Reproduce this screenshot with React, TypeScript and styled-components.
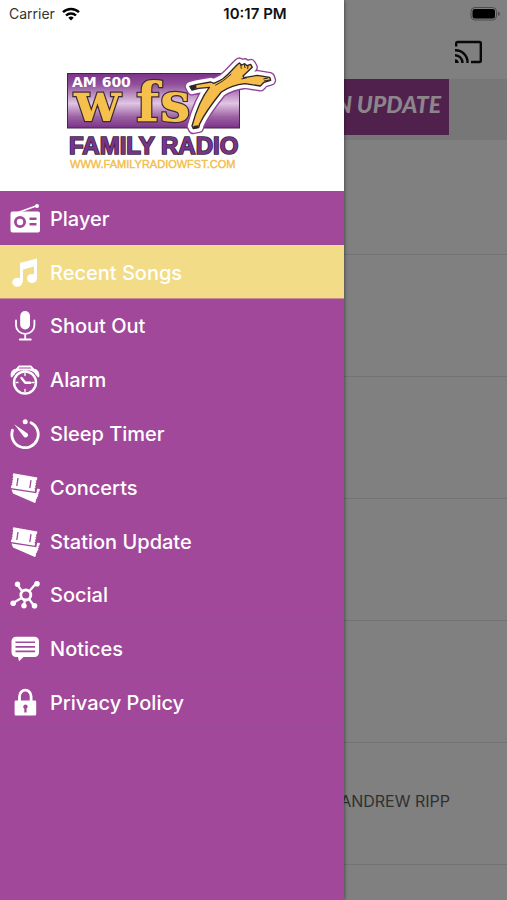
import React from 'react';
import styled, { createGlobalStyle } from 'styled-components';

const GlobalStyle = createGlobalStyle`
  * { box-sizing: border-box; }
  body {
    margin: 0;
    background: #808080;
    font-family: Inter, "Liberation Sans", sans-serif;
  }
`;

const Screen = styled.div`
  position: relative;
  min-height: 100vh;
  overflow: hidden;
  background: #808080;
`;

const StatusBar = styled.div`
  position: absolute;
  inset: 0 0 auto 0;
  z-index: 3;
  display: grid;
  grid-template-columns: 1fr auto 1fr;
  align-items: center;
  height: 27px;
  padding: 0 6px 0 9px;
  color: #111;
  font-size: 14px;
`;

const Carrier = styled.span`
  display: flex;
  align-items: center;
  gap: 7px;
  color: #333;
`;

const Clock = styled.time`
  font-size: 15px;
  font-weight: 600;
`;

const Battery = styled.svg`
  justify-self: end;
  width: 31px;
  height: 16px;
`;

const Toolbar = styled.header`
  display: flex;
  justify-content: flex-end;
  align-items: flex-end;
  height: 79px;
  padding: 0 24px 12px 0;
`;

const CastButton = styled.button`
  display: flex;
  padding: 0;
  border: 0;
  background: none;
  color: #080808;
`;

const BannerStrip = styled.div`
  display: flex;
  justify-content: center;
  height: 61px;
  padding: 0 58px 5px;
  background: #777;
`;

const Banner = styled.a`
  display: flex;
  flex: 1;
  align-items: center;
  justify-content: flex-end;
  padding: 0 8px 6px 0;
  overflow: hidden;
  background: #51214e;
  color: #8c868c;
  font: italic 900 23px Lato, sans-serif;
  text-decoration: none;
  white-space: nowrap;
`;

const Songs = styled.ul`
  margin: 0;
  padding: 0;
  list-style: none;
`;

const Song = styled.li<{ $first?: boolean }>`
  display: flex;
  align-items: center;
  justify-content: flex-end;
  height: ${(p) => (p.$first ? 115 : 122)}px;
  padding: 0 57px 6px;
  border-bottom: 1px solid #737373;
  color: #303030;
  font-size: 16px;

  &:last-child {
    height: 35px;
    border: 0;
  }
`;

const Drawer = styled.aside`
  position: absolute;
  inset: 0 auto 0 0;
  z-index: 2;
  width: 344px;
  max-width: 100%;
  background: #a1489b;
  box-shadow: 0 0 4px rgba(0, 0, 0, 0.6);
`;

const Brand = styled.div`
  height: 191px;
  padding: 50px 55px 0;
  background: #fff;
`;

const Menu = styled.nav`
  display: grid;
  grid-auto-rows: 1fr;
  height: 538px;
`;

const MenuLink = styled.a<{ $active?: boolean }>`
  display: flex;
  align-items: center;
  gap: 10px;
  padding: 3px 10px 0;
  border-bottom: 1px solid ${(p) => (p.$active ? '#c48d92' : '#9b4a98')};
  background: ${(p) => (p.$active ? '#f2dc87' : 'transparent')};
  color: #fff;
  font-size: 20px;
  font-weight: 500;
  text-decoration: none;
`;

const IconBox = styled.svg`
  flex: none;
  width: 30px;
  height: 30px;
  fill: currentColor;
`;

const line = { fill: 'none', stroke: 'currentColor', strokeLinecap: 'round', strokeLinejoin: 'round' } as const;

const RadioIcon = () => (
  <IconBox viewBox="0 0 30 30" aria-hidden="true">
    <path {...line} strokeWidth="1.6" d="M8 8.500 26 2" />
    <circle cx="27" cy="2" r="2" />
    <path fillRule="evenodd" d="M3 7.500h25a2 2 0 0 1 2 2v17a2 2 0 0 1-2 2H2.500a2 2 0 0 1-2-2v-17a2 2 0 0 1 2-2zM10 12a6 6 0 1 0 0 12 6 6 0 0 0 0-12zm0 2.800a3.200 3.200 0 1 1 0 6.400 3.200 3.200 0 0 1 0-6.400zM19.500 13.500v2.500h7v-2.500zm0 5.500v2.500h7V19z" />
  </IconBox>
);

const MusicIcon = () => (
  <IconBox viewBox="0 0 30 30" aria-hidden="true">
    <path d="M10 5 27 .5V21h-3V8.500L13 11.500V24h-3z" />
    <ellipse cx="7.300" cy="24.300" rx="5" ry="4.500" />
    <ellipse cx="22" cy="20.500" rx="5" ry="4.500" />
  </IconBox>
);

const MicIcon = () => (
  <IconBox viewBox="0 0 30 30" aria-hidden="true">
    <rect x="10.200" y="0" width="9.800" height="18.500" rx="4.900" />
    <path {...line} strokeWidth="1.800" d="M6 9.500v5a9.200 8.300 0 0 0 18.400 0v-5M15.200 23v5M9.800 28.500h11" />
  </IconBox>
);

const AlarmIcon = () => (
  <IconBox viewBox="0 0 30 30" aria-hidden="true">
    <circle {...line} cx="15" cy="17.500" r="11" strokeWidth="2.400" />
    <path {...line} strokeWidth="1.800" d="M6.500 4.500 9 1.500h12l2.500 3M3.500 9.500C4 7 5.500 5.500 8 4.500h14c2.500 1 4 2.500 4.500 5" />
    <path d="M1 12.500C-.5 7.500 2.500 3 8.500 3.500L10 5.500C6.500 6.500 4 9 2.500 12zM29 12.500C30.500 7.500 27.500 3 21.500 3.500L20 5.500c3.500 1 6 3.500 7.500 6.500z" />
    <path {...line} strokeWidth="2.400" d="m11.500 13 3.800 4.800h5" />
    <path {...line} strokeWidth="1.400" d="M15 8.500v2M15 24.500v2M6 17.500h2M22 17.500h2" />
  </IconBox>
);

const TimerIcon = () => (
  <IconBox viewBox="0 0 30 30" aria-hidden="true">
    <path {...line} strokeWidth="2.800" d="M21 3.700A13.200 13.200 0 1 1 2.500 11.300" />
    <circle cx="15.200" cy="2.800" r="2.500" />
    <path d="M4.200 5.200 17.600 14.500a2.500 2.500 0 0 1-3.500 3.500z" />
  </IconBox>
);

const TicketsIcon = () => (
  <IconBox viewBox="0 0 30 30" aria-hidden="true">
    <path d="M3.300.3 27.300 4.500 27 7l-1.200.7.700 1.500-1.100 1.100.8 1.500-1.200 1.100.6 1.500-1.100 1 .6 1.400-.4 2L.9 15l.3-2.200 1.200-1-.7-1.400L2.800 9.200 2 7.900l1.200-1.200-.8-1.300 1-1.300-.7-1.300z" />
    <path d="m1.500 16.600 24.800 3.700.9-4.600 2.700.4-.5 2.300-1.100.8.600 1.400-1.100 1.100.6 1.400-1.200 1-.3 1.500-1 1 .1 1.500-.9 2L3 20.500z" />
    <path d="m8 5-1.200 8M21 7.200l-1.200 8" fill="none" stroke="#a1489b" strokeWidth="1.300" />
  </IconBox>
);

const SocialIcon = () => (
  <IconBox viewBox="0 0 30 30" aria-hidden="true">
    <circle {...line} cx="15.800" cy="15" r="5" strokeWidth="2.800" />
    <path {...line} strokeWidth="2.200" d="M12 11 7.500 5M19.500 11l6-7M11.500 18 4 22.500M14.800 20.500 14 25M19 19l4.500 6" />
    <circle cx="7.500" cy="4.300" r="2.700" />
    <circle cx="27" cy="3.800" r="2.800" />
    <circle cx="3.200" cy="23.200" r="2.800" />
    <circle cx="14" cy="25.700" r="2.700" />
    <circle cx="24.500" cy="25.700" r="2.800" />
  </IconBox>
);

const NoticesIcon = () => (
  <IconBox viewBox="0 0 30 30" aria-hidden="true">
    <path fillRule="evenodd" d="M6 2.800h18.500A4.500 4.500 0 0 1 29 7.300v11.200a4.500 4.500 0 0 1-4.500 4.500H13.500L9 27.300l-1-4.300H6a4.500 4.500 0 0 1-4.500-4.500V7.300A4.500 4.500 0 0 1 6 2.800zM5.500 7.400v1.700h19.500V7.400zm0 4.600v1.700h19.500V12zm0 4.600v1.700h19.500v-1.700z" />
  </IconBox>
);

const LockIcon = () => (
  <IconBox viewBox="0 0 30 30" aria-hidden="true">
    <path {...line} strokeWidth="2.800" d="M9.500 13V8.500a5.800 6.300 0 0 1 11.600 0V13" />
    <path fillRule="evenodd" d="M5.800 12.500h19.200a1.200 1.200 0 0 1 1.200 1.200v12.600a1.200 1.200 0 0 1-1.200 1.200H5.800a1.200 1.200 0 0 1-1.200-1.200V13.700a1.200 1.200 0 0 1 1.200-1.200zm9.600 4a2.200 2.200 0 0 0-1.100 4.100v4h2.300v-4a2.200 2.200 0 0 0-1.200-4.100z" />
  </IconBox>
);

const crossPath =
  'M60 109 82 103 122 96 132 100 158 87 174 73 200 46 208 39 215 45 224 41 231 47 242 43 247 52 219 78 222 83 262 76 299 82 302 91 282 97 271 108 225 101C195 104 175 112 154 126 125 162 101 196 89 222L86 233 70 236 66 228C76 190 92 146 118 112L86 115 66 120z';

const Logo = () => (
  <svg width="230" height="130" viewBox="0 0 230 130" role="img" aria-label="WFST Family Radio">
    <defs>
      <linearGradient id="panel" x1="0" y1="0" x2="0" y2="1">
        <stop offset="0" stopColor="#7b3388" />
        <stop offset="0.2" stopColor="#91509b" />
        <stop offset="0.55" stopColor="#e0c5e2" />
        <stop offset="0.8" stopColor="#9b60a3" />
        <stop offset="1" stopColor="#7b3388" />
      </linearGradient>
    </defs>
    <rect x="12.500" y="23.500" width="172" height="54.500" fill="url(#panel)" stroke="#42264c" />
    <text x="17" y="37" fill="#fff" fontFamily="DejaVu Sans, sans-serif" fontWeight="700" fontSize="14">
      AM 600
    </text>
    <text x="19 81 105" y="71" fill="#f6c04d" stroke="#3c2a35" strokeWidth="2.400" paintOrder="stroke" fontFamily="DejaVu Serif, serif" fontWeight="700" fontSize="54">
      wfs
    </text>
    <g transform="translate(115 0) scale(.33333)" strokeLinejoin="round">
      <path d={crossPath} fill="#91439a" stroke="#91439a" strokeWidth="33" />
      <path d={crossPath} fill="#fff" stroke="#fff" strokeWidth="25" />
      <path d={crossPath} fill="#f6bd4a" stroke="#2d2527" strokeWidth="4" />
      <path d="M58 109 78 104 80 115 64 121zM70 228 86 226 83 234 70 236z" fill="#2d2527" />
      <path d="M212 44 214 56M223 43 225 54M234 47 233 57M294 84 280 87M300 90 282 93M184 72 160 92 136 106M231 83 214 87" fill="none" stroke="#2d2527" strokeWidth="3" />
    </g>
    <text x="14" y="104" fill="#78348a" stroke="#36243e" strokeWidth="1.600" paintOrder="stroke" fontFamily="Liberation Sans, sans-serif" fontWeight="700" fontSize="24">
      FAMILY RADIO
    </text>
    <text x="15" y="118" fill="#f3bd4b" stroke="#f3bd4b" strokeWidth="0.400" fontFamily="Liberation Sans, sans-serif" fontSize="11">
      WWW.FAMILYRADIOWFST.COM
    </text>
  </svg>
);

const menu = [
  { label: 'Player', Icon: RadioIcon },
  { label: 'Recent Songs', Icon: MusicIcon, active: true },
  { label: 'Shout Out', Icon: MicIcon },
  { label: 'Alarm', Icon: AlarmIcon },
  { label: 'Sleep Timer', Icon: TimerIcon },
  { label: 'Concerts', Icon: TicketsIcon },
  { label: 'Station Update', Icon: TicketsIcon },
  { label: 'Social', Icon: SocialIcon },
  { label: 'Notices', Icon: NoticesIcon },
  { label: 'Privacy Policy', Icon: LockIcon },
];

const songs = ['', '', '', '', '', 'ANDREW RIPP', ''];

export default function App() {
  return (
    <Screen>
      <GlobalStyle />
      <StatusBar>
        <Carrier>
          Carrier
          <svg width="18" height="14" viewBox="0 0 18 14" fill="none" stroke="#000" strokeWidth="2.400" aria-hidden="true">
            <path d="M1 5.200a11.500 11.500 0 0 1 16 0M4 8.500a7.200 7.200 0 0 1 10 0" />
            <path d="M6.300 10.800a4 4 0 0 1 5.400 0L9 13.600z" fill="#000" stroke="none" />
          </svg>
        </Carrier>
        <Clock>10:17 PM</Clock>
        <Battery viewBox="0 0 31 16" aria-hidden="true">
          <rect x="1" y="1.500" width="25.500" height="12.500" rx="4" fill="none" stroke="#4c4c4c" />
          <rect x="2.500" y="3" width="22.500" height="9.500" rx="2.500" fill="#000" />
          <path d="M28 5.500q2 .7 2 2.300T28 10z" fill="#4c4c4c" />
        </Battery>
      </StatusBar>
      <main>
        <Toolbar>
          <CastButton type="button" aria-label="Cast">
            <svg width="29" height="29" viewBox="0 0 29 29" fill="none" stroke="currentColor" strokeWidth="2.400" aria-hidden="true">
              <path d="M2.200 8.500V5.200a1.200 1.200 0 0 1 1.200-1.200h22.200a1.200 1.200 0 0 1 1.200 1.200v17.600a1.200 1.200 0 0 1-1.200 1.200H17M1 12.200A12 12 0 0 1 13.500 25M1 17.200A7.500 7.500 0 0 1 8.500 25" />
              <path d="M1 21.200A4 4 0 0 1 4.800 25H1z" fill="currentColor" stroke="none" />
            </svg>
          </CastButton>
        </Toolbar>
        <BannerStrip>
          <Banner href="#station-update">STATION UPDATE</Banner>
        </BannerStrip>
        <Songs>
          {songs.map((artist, i) => (
            <Song key={i} $first={i === 0}>{artist}</Song>
          ))}
        </Songs>
      </main>
      <Drawer>
        <Brand>
          <Logo />
        </Brand>
        <Menu aria-label="Main menu">
          {menu.map(({ label, Icon, active }) => (
            <MenuLink key={label} href="#" $active={active} aria-current={active ? 'page' : undefined}>
              <Icon />
              {label}
            </MenuLink>
          ))}
        </Menu>
      </Drawer>
    </Screen>
  );
}
